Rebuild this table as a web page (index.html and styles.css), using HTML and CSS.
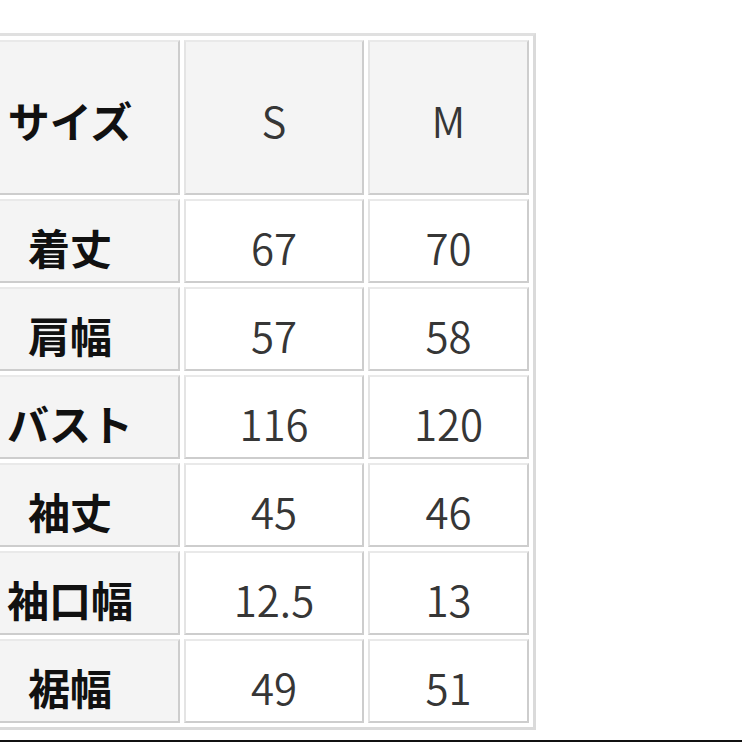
FILE: index.html
```html
<!DOCTYPE html>
<html lang="ja">
<head>
<meta charset="utf-8">
<title>サイズ表</title>
<link rel="stylesheet" href="styles.css">
</head>
<body>
<div class="page">
  <table class="size-table">
    <colgroup>
      <col class="c-label">
      <col class="c-s">
      <col class="c-m">
    </colgroup>
    <tr class="head">
      <th class="label">サイズ</th>
      <th class="val">S</th>
      <th class="val">M</th>
    </tr>
    <tr><th class="label">着丈</th><td class="val">67</td><td class="val">70</td></tr>
    <tr><th class="label">肩幅</th><td class="val">57</td><td class="val">58</td></tr>
    <tr><th class="label">バスト</th><td class="val">116</td><td class="val">120</td></tr>
    <tr><th class="label">袖丈</th><td class="val">45</td><td class="val">46</td></tr>
    <tr><th class="label">袖口幅</th><td class="val">12.5</td><td class="val">13</td></tr>
    <tr><th class="label">裾幅</th><td class="val">49</td><td class="val">51</td></tr>
  </table>
</div>
<div class="rule"></div>
</body>
</html>
```

FILE: styles.css
```css
html, body {
  margin: 0;
  padding: 0;
  background: #ffffff;
  overflow: hidden;
}

.page {
  height: 740px;
  padding-top: 33px;
  box-sizing: border-box;
  overflow: hidden;
}

.size-table {
  margin-left: -47px;
  table-layout: fixed;
  width: 583px;
  border-collapse: separate;
  border-spacing: 4px;
  border: 3px solid #dadada;
  border-top-color: #e0e0e0;
  border-left-color: #e0e0e0;
  background: #ffffff;
  font-family: "Noto Sans CJK JP", "Noto Sans", sans-serif;
  font-size: 42px;
  line-height: 1;
}

.c-label { width: 220px; }
.c-s { width: 180px; }
.c-m { width: 161px; }

.size-table tr { height: 84px; }
.size-table tr.head { height: 155px; }

.size-table th,
.size-table td {
  padding: 12px 0 0;
  text-align: center;
  vertical-align: middle;
  border: 2px solid #cdcdcd;
  border-top-color: #e9e9e9;
  border-left-color: #e4e4e4;
}

.size-table tr.head th {
  padding-top: 4px;
}

.label {
  background: #f4f4f4;
  color: #111111;
  font-weight: 700;
}

.head .val {
  background: #f4f4f4;
}

.val {
  background: #ffffff;
  color: #363636;
  font-weight: 350;
}

.rule {
  height: 2px;
  background: #111111;
}
```
